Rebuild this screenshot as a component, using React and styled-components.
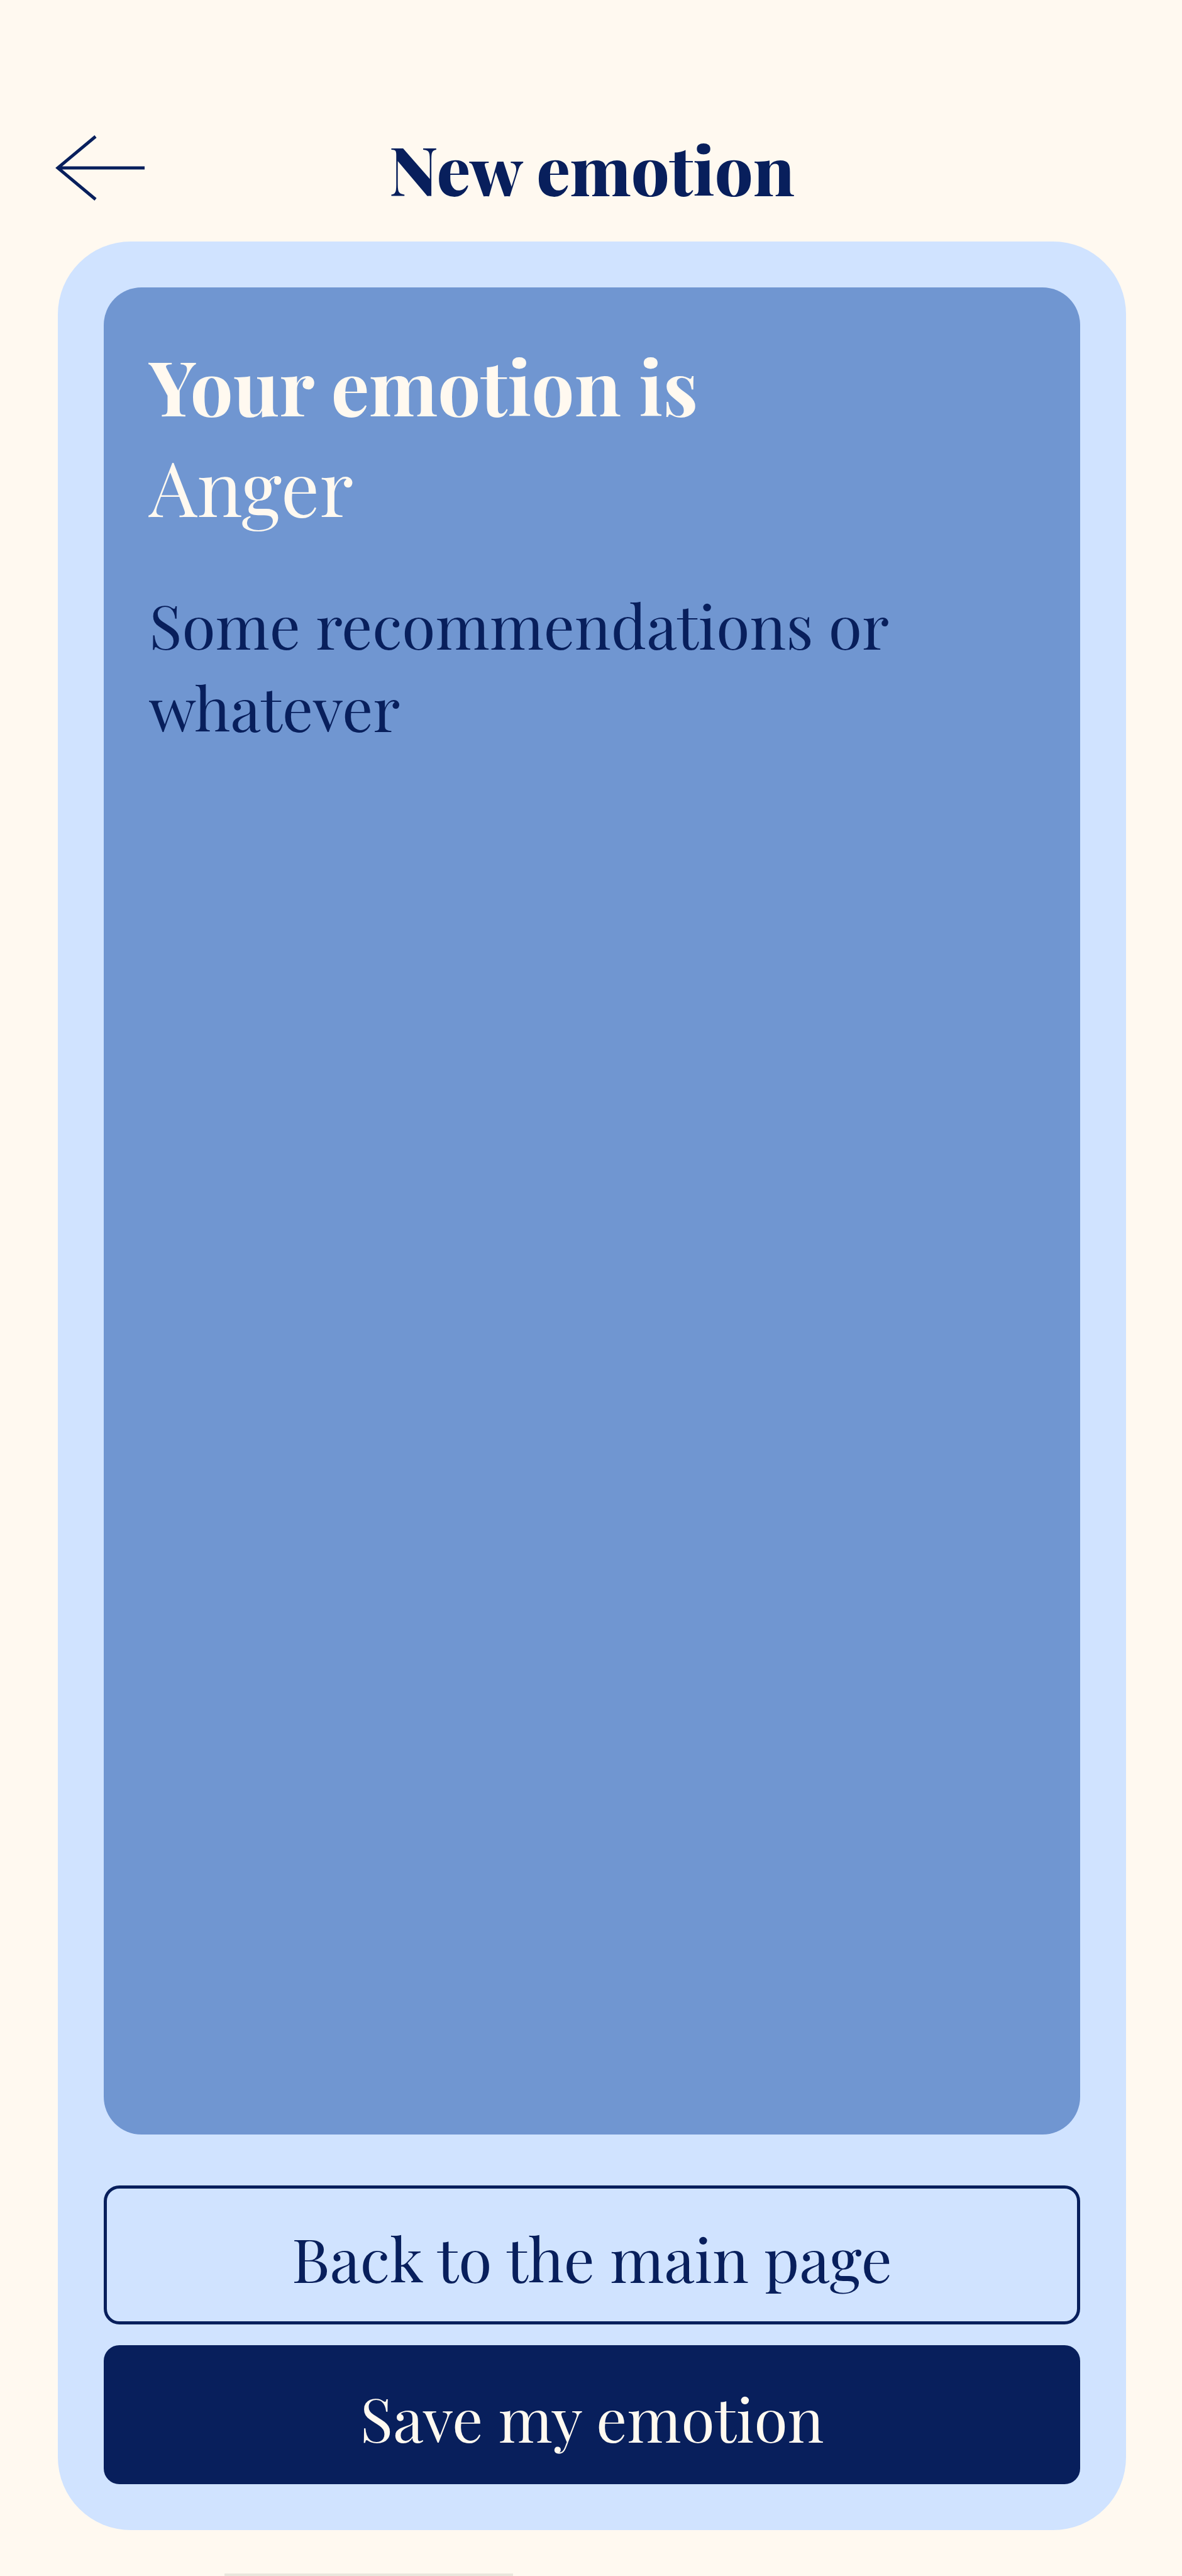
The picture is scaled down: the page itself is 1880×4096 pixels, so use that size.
import React from "react";
import styled, { createGlobalStyle, css } from "styled-components";

const color = {
  cream: "#fff9f0",
  sky: "#d0e3ff",
  blue: "#7096d1",
  navy: "#081f5c",
  shade: "#e9e6dc",
};

const GlobalStyle = createGlobalStyle`
  *, *::before, *::after { box-sizing: border-box; }
  body {
    margin: 0;
    background: ${color.cream};
    color: ${color.navy};
    font-family: "Playfair Display", "Liberation Serif", serif;
  }
`;

const Page = styled.div`
  display: flex;
  flex-direction: column;
  min-height: 100vh;
  overflow: hidden;
`;

const Header = styled.header`
  display: grid;
  grid-template-columns: 1fr auto 1fr;
  align-items: start;
  padding: 215px 85px 63px 88px;
`;

const BackButton = styled.button`
  justify-self: start;
  display: flex;
  padding: 0;
  border: 0;
  background: none;
  color: inherit;
  cursor: pointer;
`;

const Title = styled.h1`
  margin: 0;
  font-size: 107px;
  line-height: 106px;
  font-weight: 800;
`;

const Card = styled.main`
  flex: 1;
  display: flex;
  flex-direction: column;
  margin: 0 89px 0 92px;
  padding: 73px;
  border-radius: 116px;
  background: ${color.sky};
`;

const Panel = styled.section`
  flex: 1;
  padding: 75px 72px;
  border-radius: 60px;
  background: ${color.blue};
`;

const Heading = styled.h2`
  margin: 0;
  color: ${color.cream};
  font-size: 121px;
  line-height: 160px;
  font-weight: 700;
`;

const Emotion = styled.p`
  margin: 0;
  color: ${color.cream};
  font-size: 121px;
  line-height: 160px;
`;

const Advice = styled.p`
  margin: 75px 0 0;
  font-size: 97px;
  line-height: 131px;
`;

const Actions = styled.div`
  display: flex;
  flex-direction: column;
  gap: 33px;
  margin-top: 81px;
`;

const Button = styled.button`
  width: 100%;
  height: 221px;
  padding: 8px 24px 0;
  border: 5px solid ${color.navy};
  border-radius: 25px;
  font-family: inherit;
  font-size: 97px;
  line-height: 131px;
  cursor: pointer;
  ${({ $filled }) =>
    $filled
      ? css`
          background: ${color.navy};
          color: ${color.cream};
        `
      : css`
          background: transparent;
          color: ${color.navy};
        `}
`;

const Footer = styled.footer`
  padding: 69px 0 0 357px;
`;

const FooterBar = styled.div`
  width: 459px;
  height: 4px;
  background: ${color.shade};
`;

function ArrowLeft() {
  return (
    <svg width="142" height="104" viewBox="0 0 142 104" fill="none" aria-hidden="true">
      <path d="M142 52H4M64 2L4 52L64 102" stroke="currentColor" strokeWidth="5" />
    </svg>
  );
}

export default function App() {
  return (
    <>
      <GlobalStyle />
      <Page>
        <Header>
          <BackButton type="button" aria-label="Back">
            <ArrowLeft />
          </BackButton>
          <Title>New emotion</Title>
        </Header>
        <Card>
          <Panel>
            <Heading>Your emotion is</Heading>
            <Emotion>Anger</Emotion>
            <Advice>Some recommendations or whatever</Advice>
          </Panel>
          <Actions>
            <Button type="button">Back to the main page</Button>
            <Button type="button" $filled>
              Save my emotion
            </Button>
          </Actions>
        </Card>
        <Footer>
          <FooterBar />
        </Footer>
      </Page>
    </>
  );
}
